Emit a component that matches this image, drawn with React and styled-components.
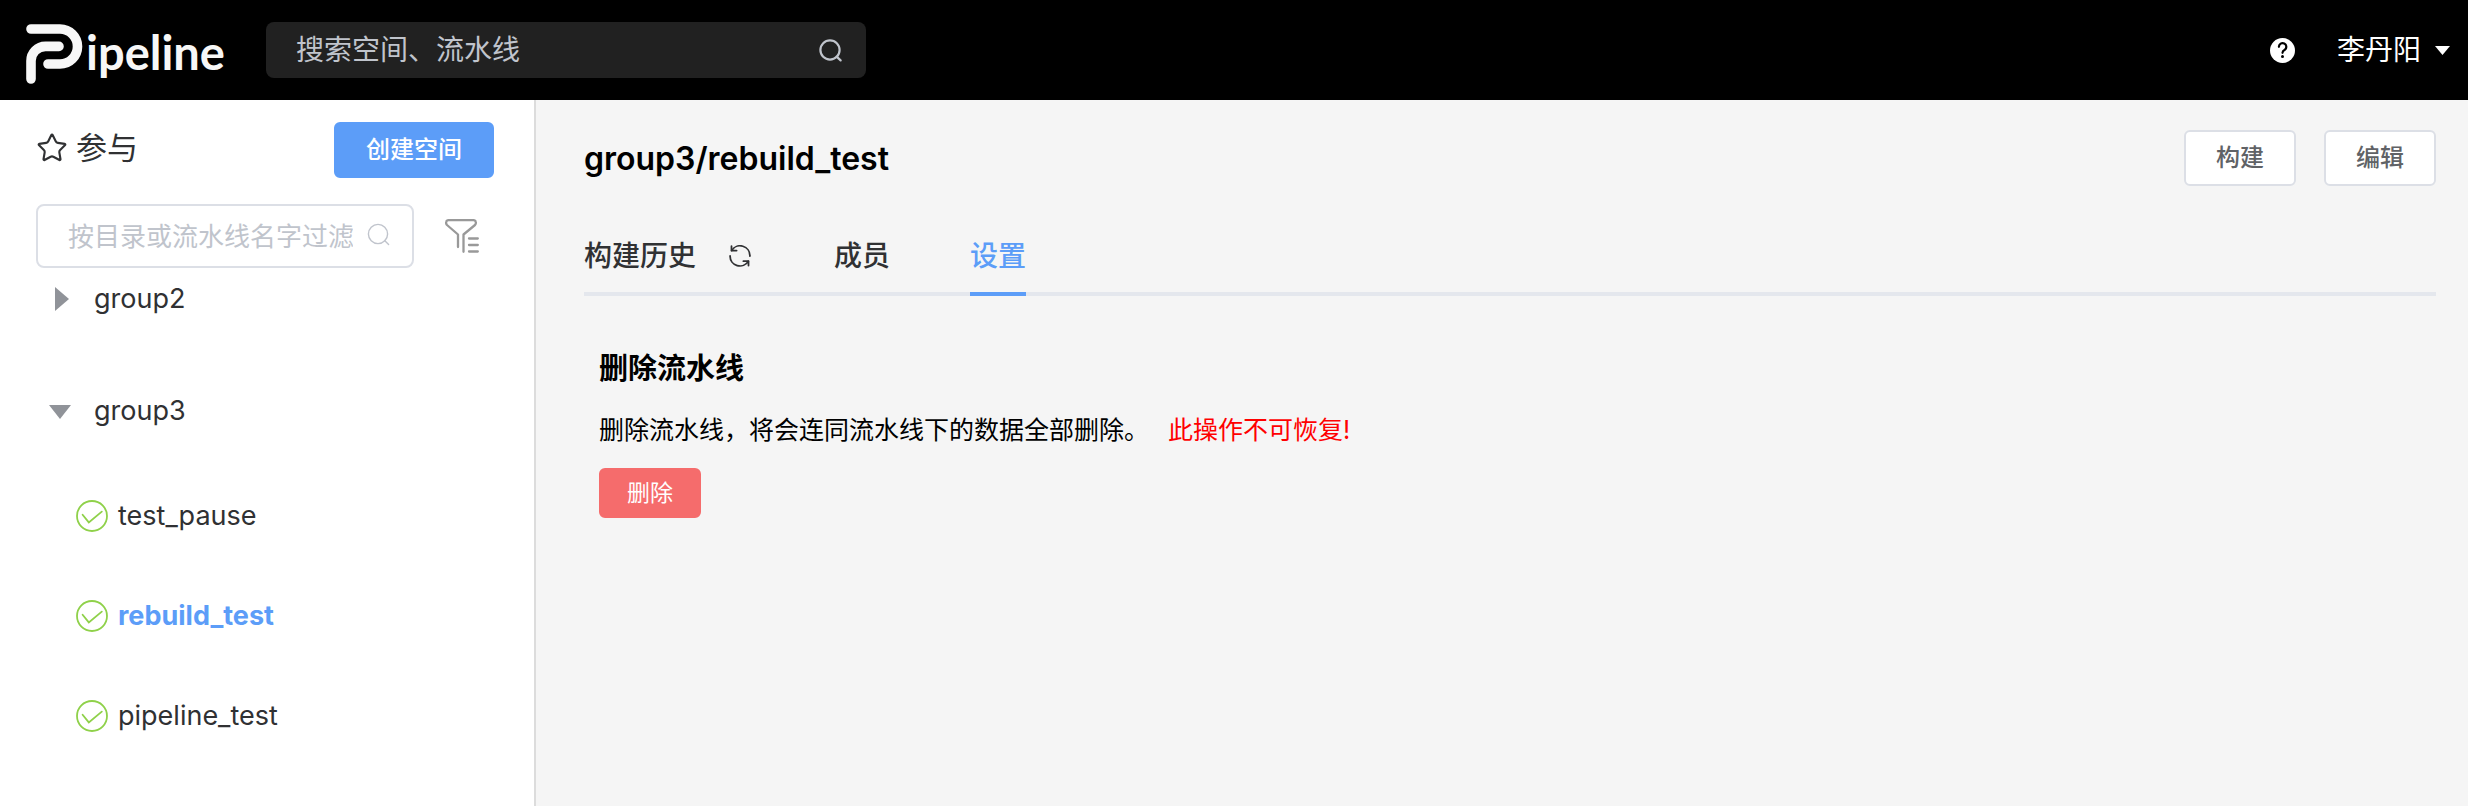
import React from "react";
import styled, { createGlobalStyle } from "styled-components";
import { Star } from "lucide-react";

const GlobalStyle = createGlobalStyle`
  *, *::before, *::after { box-sizing: border-box; }
  body {
    margin: 0;
    background: #f5f5f5;
    color: #303133;
    font-family: Inter, "Noto Sans CJK SC", sans-serif;
    font-size: 28px;
  }
  button, input { font-family: inherit; }
  button { cursor: pointer; }
  a { color: inherit; text-decoration: none; }
  h1, h2, p, ul { margin: 0; padding: 0; }
  ul { list-style: none; }
  svg { display: block; flex: none; }
`;

const Page = styled.div`
  display: flex;
  flex-direction: column;
  min-height: 100vh;
`;

const TopBar = styled.header`
  display: flex;
  align-items: center;
  height: 100px;
  padding: 0 18px 0 26px;
  background: #000;
  color: #fff;
`;

const Brand = styled.a`
  display: flex;
  align-items: flex-start;
  gap: 2px;
  width: 240px;
  height: 60px;
  margin-top: 8px;
`;

const BrandName = styled.span`
  color: #f7f7f7;
  font-family: Lato, sans-serif;
  font-size: 47px;
  font-weight: 700;
  line-height: 56px;
`;

const GlobalSearch = styled.form`
  display: flex;
  align-items: center;
  width: 600px;
  height: 56px;
  padding: 0 24px 0 30px;
  border-radius: 8px;
  background: #212121;
  color: #c0c4cc;
`;

const SearchInput = styled.input`
  flex: 1;
  min-width: 0;
  height: 100%;
  padding: 0;
  border: 0;
  outline: 0;
  background: transparent;
  color: inherit;
  font-size: ${(p) => p.$size}px;
  &::placeholder { color: #c0c4cc; opacity: 1; }
`;

const IconButton = styled.button`
  display: flex;
  align-items: center;
  justify-content: center;
  padding: 0;
  border: 0;
  background: transparent;
  color: inherit;
`;

const Account = styled.div`
  display: flex;
  align-items: center;
  gap: 42px;
  margin-left: auto;
`;

const UserButton = styled(IconButton)`
  gap: 14px;
  font-size: 28px;
  line-height: 40px;
`;

const Body = styled.div`
  display: flex;
  flex: 1;
`;

const Sidebar = styled.aside`
  flex: none;
  width: 536px;
  padding: 22px 40px 0 36px;
  border-right: 2px solid #dcdcdc;
  background: #fff;
`;

const SidebarHeader = styled.div`
  display: flex;
  align-items: center;
  justify-content: space-between;
`;

const SidebarTitle = styled.h2`
  display: flex;
  align-items: center;
  gap: 8px;
  padding-bottom: 4px;
  font-size: 31px;
  font-weight: 400;
  line-height: 40px;
`;

const Button = styled.button`
  height: 56px;
  padding: 0 30px;
  border: 2px solid ${(p) => (p.$primary ? "#5c9df8" : "#dcdfe6")};
  border-radius: 6px;
  background: ${(p) => (p.$primary ? "#5c9df8" : "#fff")};
  color: ${(p) => (p.$primary ? "#fff" : "#606266")};
  font-size: 24px;
  font-weight: 500;
  line-height: 32px;
`;

const DangerButton = styled(Button)`
  height: 50px;
  padding: 0 26px;
  border-color: #f56c6c;
  background: #f56c6c;
  color: #fff;
  font-size: 23px;
  font-weight: 400;
`;

const FilterRow = styled.div`
  display: flex;
  align-items: center;
  gap: 28px;
  margin-top: 26px;
`;

const FilterBox = styled.form`
  display: flex;
  align-items: center;
  gap: 14px;
  width: 378px;
  height: 64px;
  padding: 0 22px 0 30px;
  border: 2px solid #dcdfe6;
  border-radius: 8px;
  color: #c0c4cc;
`;

const FieldIcon = styled.span`
  padding-bottom: 4px;
`;

const FilterButton = styled(IconButton)`
  width: 40px;
  height: 40px;
  color: #999;
`;

const Tree = styled.ul`
  display: flex;
  flex-direction: column;
  gap: 50px;
`;

const GroupToggle = styled.button`
  display: flex;
  align-items: center;
  gap: 23px;
  width: 100%;
  height: 62px;
  padding: 0 0 0 13px;
  border: 0;
  background: transparent;
  color: inherit;
  font-size: 27px;
  line-height: 40px;
`;

const Arrow = styled.svg`
  color: #909399;
`;

const Children = styled.ul`
  margin-top: 24px;
  padding-left: 40px;
`;

const PipelineLink = styled.a`
  display: flex;
  align-items: center;
  gap: 10px;
  height: 100px;
  color: ${(p) => (p.$active ? "#5c9df8" : "inherit")};
  font-size: 27px;
  font-weight: ${(p) => (p.$active ? 700 : 400)};
  line-height: 40px;
`;

const Main = styled.main`
  flex: 1;
  min-width: 0;
  padding: 30px 32px 0 48px;
`;

const TitleRow = styled.div`
  display: flex;
  align-items: center;
  gap: 28px;
`;

const Title = styled.h1`
  flex: 1;
  padding-top: 2px;
  color: #000;
  font-size: 32px;
  font-weight: 600;
  line-height: 40px;
`;

const Tabs = styled.nav`
  display: flex;
  gap: 80px;
  margin-top: 50px;
  box-shadow: inset 0 -4px #e4e7ed;
`;

const TabItem = styled.div`
  display: flex;
  align-items: flex-start;
  gap: 30px;
`;

const Tab = styled.a`
  padding-bottom: 16px;
  border-bottom: 4px solid ${(p) => (p.$active ? "#5c9df8" : "transparent")};
  color: ${(p) => (p.$active ? "#5c9df8" : "inherit")};
  font-size: 28px;
  font-weight: 500;
  line-height: 40px;
`;

const RefreshButton = styled(IconButton)`
  width: 28px;
  height: 40px;
`;

const Settings = styled.section`
  margin-top: 53px;
  padding-left: 15px;
  color: #000;
`;

const SettingsTitle = styled.h2`
  font-size: 29px;
  font-weight: 700;
  line-height: 40px;
`;

const Description = styled.p`
  display: flex;
  flex-wrap: wrap;
  column-gap: 19px;
  margin: 21px 0 18px;
  font-size: 25px;
  line-height: 40px;
`;

const Warning = styled.span`
  color: #f00;
`;

const LogoMark = () => (
  <svg width="58" height="60" viewBox="0 0 58 60" fill="none" stroke="#f7f7f7" strokeWidth="9.6" strokeLinecap="round" aria-hidden="true">
    <path d="M5 5H34a17.3 17.3 0 0 1 0 35H22" />
    <path d="M33 22.4H19.5A14.5 14.5 0 0 0 5 37V55" />
  </svg>
);

const SearchIcon = ({ stroke }) => (
  <svg width="23" height="23" viewBox="0 0 23 23" fill="none" stroke="currentColor" strokeWidth={stroke} strokeLinecap="round" aria-hidden="true">
    <circle cx="11" cy="11" r="9.6" />
    <path d="M17.6 17.6 21.6 21.4" />
  </svg>
);

const HelpIcon = () => (
  <svg width="25" height="25" viewBox="0 0 25 25" aria-hidden="true">
    <circle cx="12.5" cy="12.5" r="12.5" fill="currentColor" />
    <path d="M8.900 8.800A3.700 3.700 0 1 1 14.800 11.800Q12.500 13 12.500 14.800" fill="none" stroke="#000" strokeWidth="2.2" strokeLinecap="round" />
    <circle cx="12.500" cy="18.600" r="1.500" fill="#000" />
  </svg>
);

const FilterIcon = () => (
  <svg width="34" height="34" viewBox="0 0 34 34" fill="none" stroke="currentColor" strokeWidth="2.3" strokeLinecap="round" strokeLinejoin="round" aria-hidden="true">
    <path d="M13 28V15.5L2 6Q.8 4.600 1.200 3Q1.600 1.200 3.500 1.200H28.500Q30.400 1.200 30.800 3Q31.200 4.600 30 6L18.500 15.500V32.800" />
    <path d="M24 19.500H32.800M24 26H32.800M24 32.500H32.800" />
  </svg>
);

const CheckIcon = () => (
  <svg width="32" height="32" viewBox="0 0 32 32" fill="none" stroke="#8fd14a" strokeWidth="1.8" strokeLinecap="round" aria-hidden="true">
    <circle cx="16" cy="16" r="15" />
    <path d="M6.600 14.800 12.800 22.400 25.800 11.600" />
  </svg>
);

const RefreshIcon = () => (
  <svg width="22" height="22" viewBox="0 0 22 22" fill="none" stroke="currentColor" strokeWidth="1.8" strokeLinecap="round" strokeLinejoin="round" aria-hidden="true">
    <path d="M2.500 1.200V5.600H7.600" />
    <path d="M2.700 5.600A9.800 9.800 0 0 1 20.900 11" />
    <path d="M19.500 20.600V16.200H14.400" />
    <path d="M19.300 16.200A9.800 9.800 0 0 1 1.100 11" />
  </svg>
);

const UserCaret = () => (
  <svg width="15" height="9" viewBox="0 0 15 9" fill="currentColor" aria-hidden="true">
    <path d="M0 0H15L7.500 9Z" />
  </svg>
);

const GroupArrow = ({ open }) => (
  <Arrow width="22" height="24" viewBox="0 0 22 24" fill="currentColor" aria-hidden="true">
    <path d={open ? "M0 6H22L11 20Z" : "M6 0 20 12 6 24Z"} />
  </Arrow>
);

const groups = [
  { name: "group2", open: false, pipelines: [] },
  { name: "group3", open: true, pipelines: ["test_pause", "rebuild_test", "pipeline_test"] },
];

const current = "rebuild_test";

export default function App() {
  return (
    <Page>
      <GlobalStyle />
      <TopBar>
        <Brand href="#" aria-label="Pipeline">
          <LogoMark />
          <BrandName>ipeline</BrandName>
        </Brand>
        <GlobalSearch role="search">
          <SearchInput $size={28} placeholder="搜索空间、流水线" aria-label="搜索空间、流水线" />
          <IconButton type="button" aria-label="搜索">
            <SearchIcon stroke={2.2} />
          </IconButton>
        </GlobalSearch>
        <Account>
          <IconButton type="button" aria-label="帮助">
            <HelpIcon />
          </IconButton>
          <UserButton type="button">
            李丹阳
            <UserCaret />
          </UserButton>
        </Account>
      </TopBar>
      <Body>
        <Sidebar>
          <SidebarHeader>
            <SidebarTitle>
              <Star size={32} strokeWidth={1.6} />
              参与
            </SidebarTitle>
            <Button type="button" $primary>创建空间</Button>
          </SidebarHeader>
          <FilterRow>
            <FilterBox>
              <SearchInput $size={26} placeholder="按目录或流水线名字过滤" aria-label="按目录或流水线名字过滤" />
              <FieldIcon>
                <SearchIcon stroke={1.4} />
              </FieldIcon>
            </FilterBox>
            <FilterButton type="button" aria-label="过滤">
              <FilterIcon />
            </FilterButton>
          </FilterRow>
          <Tree>
            {groups.map((group) => (
              <li key={group.name}>
                <GroupToggle type="button" aria-expanded={group.open}>
                  <GroupArrow open={group.open} />
                  {group.name}
                </GroupToggle>
                {group.open && (
                  <Children>
                    {group.pipelines.map((name) => (
                      <li key={name}>
                        <PipelineLink href="#" $active={name === current}>
                          <CheckIcon />
                          {name}
                        </PipelineLink>
                      </li>
                    ))}
                  </Children>
                )}
              </li>
            ))}
          </Tree>
        </Sidebar>
        <Main>
          <TitleRow>
            <Title>group3/rebuild_test</Title>
            <Button type="button">构建</Button>
            <Button type="button">编辑</Button>
          </TitleRow>
          <Tabs>
            <TabItem>
              <Tab href="#">构建历史</Tab>
              <RefreshButton type="button" aria-label="刷新">
                <RefreshIcon />
              </RefreshButton>
            </TabItem>
            <Tab href="#">成员</Tab>
            <Tab href="#" $active aria-current="page">设置</Tab>
          </Tabs>
          <Settings>
            <SettingsTitle>删除流水线</SettingsTitle>
            <Description>
              <span>删除流水线，将会连同流水线下的数据全部删除。</span>
              <Warning>此操作不可恢复!</Warning>
            </Description>
            <DangerButton type="button">删除</DangerButton>
          </Settings>
        </Main>
      </Body>
    </Page>
  );
}
